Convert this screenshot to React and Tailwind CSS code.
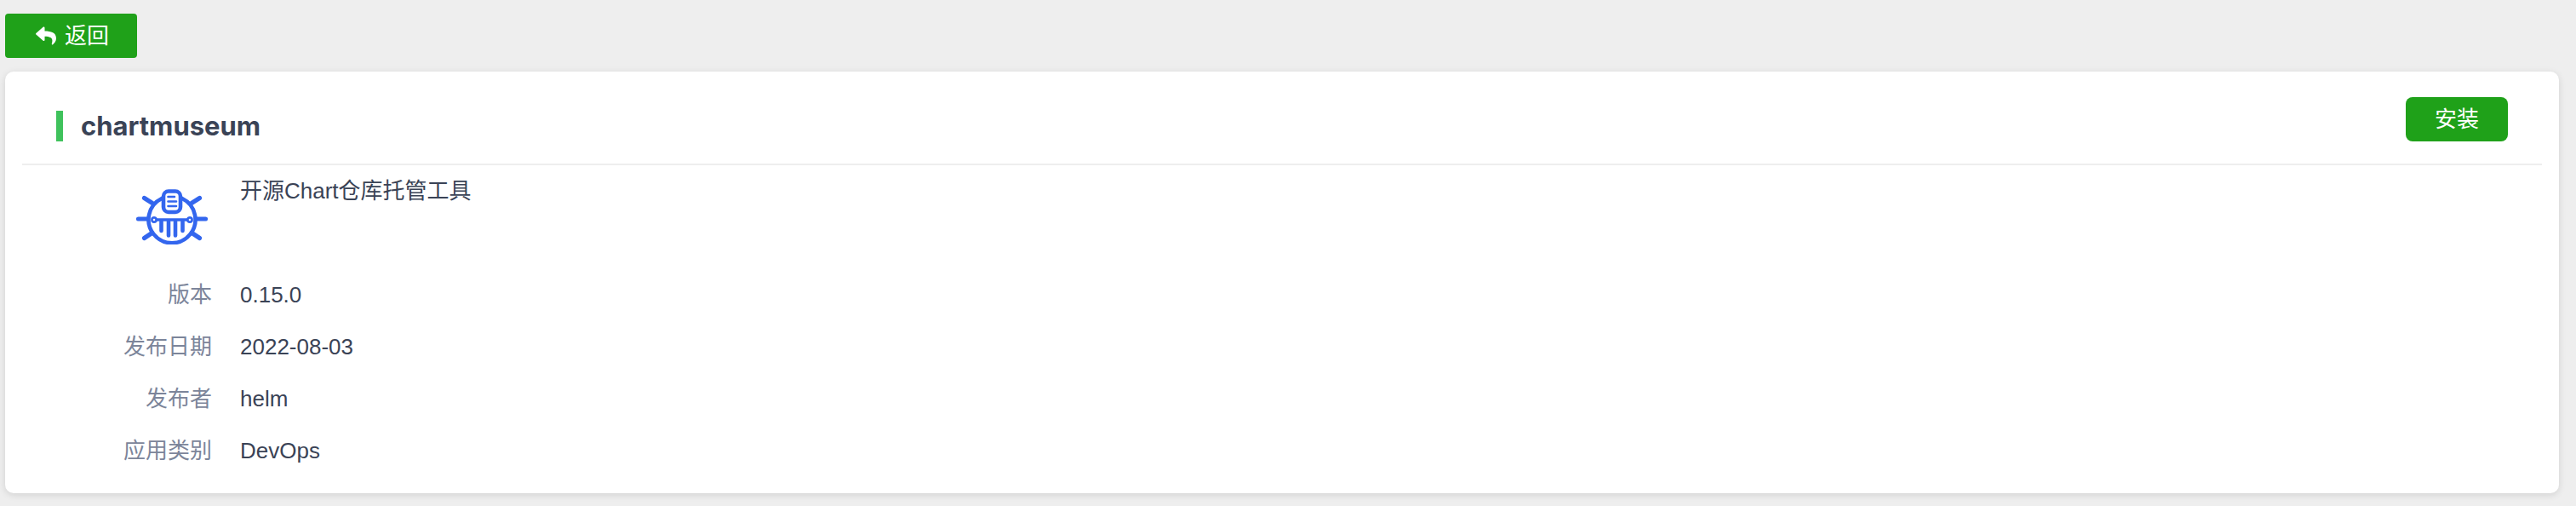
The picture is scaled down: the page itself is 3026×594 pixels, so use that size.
import { FaReply } from 'react-icons/fa'

const fontStack = { fontFamily: '"Liberation Sans", "Noto Sans CJK SC", sans-serif' }

const rows = [
  { label: '版本', value: '0.15.0' },
  { label: '发布日期', value: '2022-08-03' },
  { label: '发布者', value: 'helm' },
  { label: '应用类别', value: 'DevOps' },
]

const ChartIcon = () => (
  <svg width="84" height="65" viewBox="0 0 84 65" fill="none" stroke="#3366ee" strokeLinecap="round" strokeLinejoin="round">
    <path d="M30 11A27.500 27.500 0 1 0 54 11" strokeWidth="4.600" />
    <path d="M2.500 35H13M71 35H81.500M9.500 10.500L19 16.500M74.500 10.500L65 16.500M9.500 57.500L18.500 51.500M74.500 57.500L65.500 51.500" strokeWidth="5.200" />
    <rect x="32" y="2.500" width="20" height="24.500" rx="6" fill="#fff" strokeWidth="4.600" />
    <path d="M37.500 9H45M37.500 14.500H47M37.500 20H47" strokeWidth="2.600" />
    <path d="M21 36H63" strokeWidth="3.600" />
    <circle cx="21" cy="36" r="2.600" fill="#fff" strokeWidth="2.600" />
    <circle cx="63" cy="36" r="2.600" fill="#fff" strokeWidth="2.600" />
    <path d="M29.500 38V49M38 38V54.500M46 38V54.500M54.500 38V49" strokeWidth="4.600" />
  </svg>
)

const App = () => {
  return (
    <div className="h-[594px] bg-[#eeeeee] pt-4 pl-1.5 pr-5 pb-[15px] overflow-hidden" style={fontStack}>
      <button className="flex items-center justify-center gap-2.5 w-[155px] h-[52px] pl-[3px] bg-[#1fa119] rounded text-white text-[26px]">
        <FaReply size={24} />
        返回
      </button>

      <div className="mt-4 h-[495px] bg-white rounded-[10px] shadow-[0_2px_8px_rgba(0,0,0,0.12)] px-5">
        <div className="flex items-center justify-between h-[110px] border-b-2 border-[#eeeeee] pl-10 pr-10">
          <div className="flex items-center h-9 mt-5 border-l-[8px] border-[#3fc25c] pl-[21px] text-[31px] font-bold text-[#3a4356]" style={{ fontFamily: 'Inter, sans-serif' }}>
            chartmuseum
          </div>
          <button className="w-[120px] h-[52px] mt-1 bg-[#1fa119] rounded-lg text-white text-[26px]">
            安装
          </button>
        </div>

        <div className="flex mt-3">
          <div className="w-[223px] flex justify-end pr-[5px] pt-4">
            <ChartIcon />
          </div>
          <div className="ml-[33px] text-[26px] leading-9 text-[#3a4356]">开源Chart仓库托管工具</div>
        </div>

        <div className="flex flex-col gap-[25px] mt-[41px]">
          {rows.map((row) => (
            <div key={row.label} className="flex items-center h-9 text-[26px]">
              <div className="w-[223px] text-right text-[#7c859a]">{row.label}</div>
              <div className="ml-[33px] text-[#3a4356]">{row.value}</div>
            </div>
          ))}
        </div>
      </div>
    </div>
  )
}

export default App
